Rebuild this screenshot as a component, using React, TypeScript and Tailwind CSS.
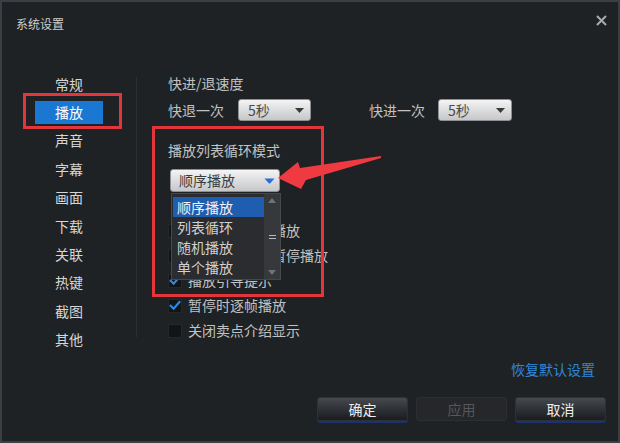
import React from "react";

const NAV = ["常规", "播放", "声音", "字幕", "画面", "下载", "关联", "热键", "截图", "其他"];
const LIST = ["顺序播放", "列表循环", "随机播放", "单个播放"];
const CHECKS = [
  { label: "自动记忆上次播放", checked: false },
  { label: "最小化时自动暂停播放", checked: false },
  { label: "播放引导提示", checked: true },
  { label: "暂停时逐帧播放", checked: true },
  { label: "关闭卖点介绍显示", checked: false },
];

function Caret({ blue }: { blue?: boolean }) {
  return blue ? (
    <svg width="11" height="6" viewBox="0 0 11 6">
      <path d="M0.5 0.5 H10.5 L6.5 5 Q5.5 6 4.5 5 Z" fill="#2a6fd6" />
    </svg>
  ) : (
    <svg width="9" height="5" viewBox="0 0 9 5">
      <path d="M0 0 H9 L4.5 5 Z" fill="#3a3a3a" />
    </svg>
  );
}

function Select({ value, width }: { value: string; width: string }) {
  return (
    <div
      className={`${width} h-[22px] flex items-center justify-between pl-[9px] pr-[6px] rounded-[3px] border border-[#8e9094] bg-gradient-to-b from-[#f4f4f4] to-[#c6c7c9] text-[14px] text-[#4a4a4a]`}
    >
      <span>{value}</span>
      <Caret />
    </div>
  );
}

function Checkbox({ checked }: { checked: boolean }) {
  return (
    <div className="w-[14px] h-[14px] bg-[#131416] border border-[#25272a] flex items-center justify-center">
      {checked && (
        <svg width="13" height="11" viewBox="0 0 13 11">
          <path d="M1 5 L5 9 L12 1" stroke="#2b8ae0" strokeWidth="2.4" fill="none" />
        </svg>
      )}
    </div>
  );
}

function Button({ label, disabled }: { label: string; disabled?: boolean }) {
  return (
    <div
      className={
        disabled
          ? "w-[91px] h-[24px] rounded-[3px] flex items-center justify-center bg-[#25272a] border border-[#2c2e31] text-[14px] text-[#55585c]"
          : "w-[91px] h-[24px] rounded-[3px] flex items-center justify-center bg-gradient-to-b from-[#46494e] to-[#1a1c20] border border-[#2e3136] shadow-[0_2px_0_#183272] text-[14px] text-[#eeeeee]"
      }
    >
      {label}
    </div>
  );
}

export default function App() {
  return (
    <div className="w-[620px] h-[443px] box-border border-2 border-[#3b3e42] bg-[#1f2225] flex flex-col font-['Noto_Sans_CJK_SC',sans-serif] select-none">
      {/* Title bar */}
      <div className="h-[46px] flex items-start justify-between pl-[14px] pr-[11px]">
        <span className="pt-[13px] leading-[18px] text-[12px] text-[#cfcfcf]">系统设置</span>
        <svg width="11" height="11" viewBox="0 0 11 11" className="mt-[13px]">
          <path d="M1 1 L10 10 M10 1 L1 10" stroke="#a9abad" strokeWidth="2" />
        </svg>
      </div>

      {/* Body */}
      <div className="h-[307px] flex">
        {/* Nav */}
        <div className="w-[134px] flex flex-col pt-[22px]">
          {NAV.map((item) =>
            item === "播放" ? (
              <div key={item} className="relative h-[28.4px] flex items-center justify-center">
                <div className="w-[68px] h-[23px] bg-[#1b78d2] flex items-center justify-center text-[14px] text-white">
                  {item}
                </div>
                <div className="absolute left-[21px] top-[-5px] w-[99px] h-[36px] border-[3px] border-[#e2353c] pointer-events-none" />
              </div>
            ) : (
              <div key={item} className="h-[28.4px] flex items-center justify-center text-[14px] text-[#d6d6d6]">
                {item}
              </div>
            )
          )}
        </div>

        <div className="w-px h-[260px] mt-[29px] bg-[#2b2e32]" />

        {/* Content */}
        <div className="relative flex-1 pl-[31px] pt-[25px] text-[14px] text-[#c2c2c2]">
          <div className="leading-[20px]">快进/退速度</div>
          <div className="mt-[6px] flex items-center h-[22px]">
            <span className="w-[70px]">快退一次</span>
            <Select value="5秒" width="w-[73px]" />
            <span className="ml-[58px] w-[69px]">快进一次</span>
            <Select value="5秒" width="w-[74px]" />
          </div>

          <div className="mt-[19px] leading-[20px]">播放列表循环模式</div>

          <div className="relative mt-[9px] ml-[2px] w-[110px] h-[23px]">
            <div className="h-full flex items-center justify-between pl-[8px] pr-[4px] rounded-[3px] border border-[#8e9094] bg-gradient-to-b from-[#f4f4f4] to-[#c6c7c9] text-[#3c3c3c]">
              <span>顺序播放</span>
              <Caret blue />
            </div>

            {/* Open dropdown list */}
            <div className="absolute z-10 top-[24px] left-[1px] w-[110px] h-[87px] flex bg-[#2a2c30] border border-[#45484c]">
              <div className="flex-1 flex flex-col pt-[3px] pl-[1px]">
                {LIST.map((opt, i) => (
                  <div
                    key={opt}
                    className={`h-[20px] leading-[20px] pl-[4px] ${i === 0 ? "bg-[#1e5db0] text-[#f2f2f2]" : "text-[#d0d0d0]"}`}
                  >
                    {opt}
                  </div>
                ))}
              </div>
              <div className="w-[16px] bg-[#36383c] flex flex-col items-center justify-between py-[4px]">
                <svg width="8" height="5" viewBox="0 0 8 5">
                  <path d="M0 5 L4 0 L8 5 Z" fill="#6f7276" />
                </svg>
                <div className="flex flex-col gap-[2px]">
                  <div className="w-[7px] h-px bg-[#b8babd]" />
                  <div className="w-[7px] h-px bg-[#b8babd]" />
                </div>
                <svg width="8" height="5" viewBox="0 0 8 5">
                  <path d="M0 0 L8 0 L4 5 Z" fill="#6f7276" />
                </svg>
              </div>
            </div>
          </div>

          <div className="mt-[26px] flex flex-col">
            {CHECKS.map((c) => (
              <div key={c.label} className="h-[25px] flex items-center gap-[6px]">
                <Checkbox checked={c.checked} />
                <span>{c.label}</span>
              </div>
            ))}
          </div>

          {/* Red annotation box */}
          <div className="absolute z-20 left-[15px] top-[78px] w-[172px] h-[171px] border-[3px] border-[#e2353c] pointer-events-none" />

          {/* Red annotation arrow */}
          <svg
            width="106"
            height="36"
            viewBox="0 0 106 36"
            className="absolute z-30 left-[140px] top-[107px] pointer-events-none"
          >
            <polygon points="1,23 21,7 23,13 104,1 104,3 29,25 24,34" fill="#ee3a40" />
          </svg>
        </div>
      </div>

      {/* Footer */}
      <div className="flex flex-col items-end">
        <span className="mt-[4px] mr-[23px] leading-[20px] text-[14px] text-[#2f87d8]">恢复默认设置</span>
        <div className="mt-[18px] mr-[12px] flex gap-[8px]">
          <Button label="确定" />
          <Button label="应用" disabled />
          <Button label="取消" />
        </div>
      </div>
    </div>
  );
}
